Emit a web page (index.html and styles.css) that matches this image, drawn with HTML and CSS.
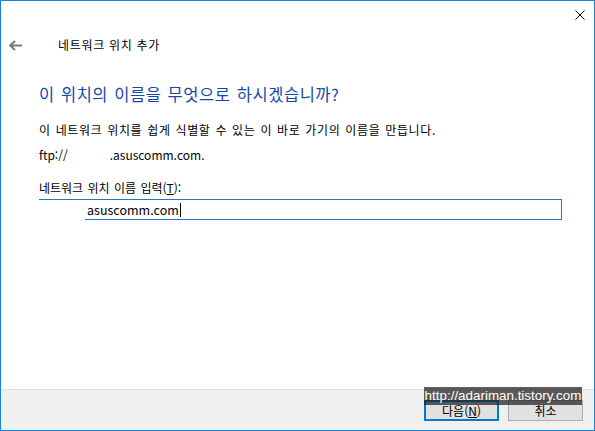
FILE: index.html
```html
<!DOCTYPE html>
<html lang="ko">
<head>
    <meta charset="UTF-8">
    <meta name="viewport" content="width=device-width, initial-scale=1.0">
    <title>네트워크 위치 추가</title>
    <link rel="stylesheet" href="styles.css">
</head>
<body>

    <div class="window">
        <div class="titlebar">
            <span class="close-btn" aria-label="닫기">
                <svg width="10" height="10" viewBox="0 0 10 10">
                    <path d="M0.5 0.5 L9.5 9.5 M9.5 0.5 L0.5 9.5" stroke="#000" stroke-width="1" fill="none"/>
                </svg>
            </span>
        </div>

        <div class="nav-row">
            <span class="back-btn" aria-label="뒤로">
                <svg width="13" height="11" viewBox="0 0 13 11">
                    <path d="M6 1 L1.2 5.5 L6 10 M1.2 5.5 L13 5.5" stroke="#7a7a7a" stroke-width="2" fill="none"/>
                </svg>
            </span>
            <span class="nav-title">네트워크 위치 추가</span>
        </div>

        <div class="content">
            <h1 class="instruction">이 위치의 이름을 무엇으로 하시겠습니까?</h1>
            <p class="desc">이 네트워크 위치를 쉽게 식별할 수 있는 이 바로 가기의 이름을 만듭니다.</p>
            <p class="address">ftp://<span class="hidden-part"></span>.asuscomm.com.</p>

            <label class="field-label" for="locName">네트워크 위치 이름 입력(<u>T</u>):</label>
            <div class="field" id="locName">
                <span class="redact"></span>
                <span class="field-text">asuscomm.com</span><span class="caret"></span>
            </div>
        </div>

        <div class="footer">
            <!-- blog watermark sitting over the buttons -->
            <div class="watermark">http://adariman.tistory.com</div>
            <button class="btn btn-default">다음(<u>N</u>)</button>
            <button class="btn">취소</button>
        </div>
    </div>

</body>
</html>
```

FILE: styles.css
```css
* {
    box-sizing: border-box;
}

html, body {
    margin: 0;
    padding: 0;
    background: #fff;
}

body {
    font-family: "Noto Sans CJK KR", "Noto Sans", sans-serif;
    font-size: 12px;
    color: #000;
}

.window {
    width: 595px;
    height: 431px;
    border: 1px solid #1883d7;
    background: #fff;
    display: flex;
    flex-direction: column;
}

/* --- Title bar --- */
.titlebar {
    height: 30px;
    display: flex;
    justify-content: flex-end;
    align-items: center;
    padding-right: 9px;
}
.close-btn {
    display: flex;
    width: 10px;
    height: 10px;
    margin-top: -2px;
}

.nav-row {
    height: 28px;
    display: flex;
    align-items: center;
}
.back-btn {
    display: flex;
    margin-left: 8px;
    width: 13px;
}
.nav-title {
    margin-left: 36px;
    line-height: 16px;
    letter-spacing: 0.7px;
}

/* --- Main content --- */
.content {
    padding-left: 38px;
    padding-right: 32px;
}

.instruction {
    margin: 23px 0 0;
    font-size: 16.5px;
    font-weight: normal;
    line-height: 24px;
    color: #1549a8;
    word-spacing: 1px;
    letter-spacing: 0.55px;
}

.desc {
    margin: 16px 0 0;
    line-height: 16px;
    word-spacing: 1px;
    letter-spacing: 0.62px;
}

.address {
    margin: 9px 0 0;
    line-height: 16px;
}
.hidden-part {
    display: inline-block;
    width: 42px;
}

.field-label {
    display: block;
    margin-top: 17px;
    line-height: 16px;
    word-spacing: 1px;
}

.field {
    position: relative;
    margin-top: 3px;
    height: 21px;
    border: 1px solid #1a79cc;
    padding-left: 47px;
    display: flex;
    align-items: center;
    font-size: 12.5px;
}
/* blanked-out part of the name */
.redact {
    position: absolute;
    left: -1px;
    top: 0;
    width: 46px;
    height: 20px;
    background: #fff;
}
.caret {
    display: inline-block;
    width: 1px;
    height: 14px;
    background: #000;
    margin-left: 1px;
}

/* --- Footer with buttons --- */
.footer {
    position: relative;
    margin-top: auto;
    height: 41px;
    border-top: 1px solid #dfdfdf;
    background: #f0f0f0;
    display: flex;
    justify-content: flex-end;
    align-items: flex-start;
    padding: 10px 11px 0 0;
    gap: 9px;
}

.btn {
    width: 75px;
    height: 21px;
    padding: 0;
    font-family: inherit;
    font-size: 12px;
    line-height: 16px;
    color: #000;
    background: #e1e1e1;
    border: 1px solid #adadad;
}
.btn-default {
    border: 2px solid #0078d7;
}

.watermark {
    position: absolute;
    top: -3px;
    right: 12px;
    width: 158px;
    height: 18px;
    background: rgba(30, 30, 30, 0.72);
    color: #fff;
    font-family: "Liberation Sans", Arial, sans-serif;
    font-size: 13.4px;
    line-height: 18px;
    text-align: center;
    z-index: 2;
}
```
